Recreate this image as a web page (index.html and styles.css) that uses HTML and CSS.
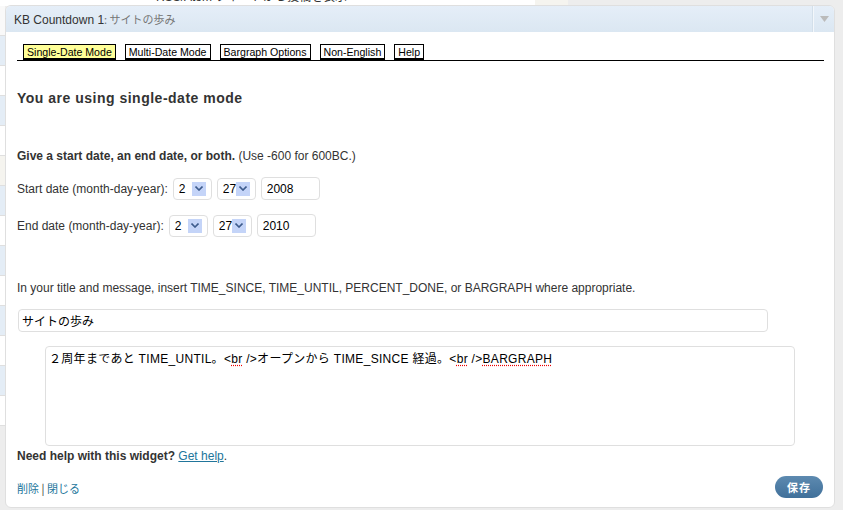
FILE: index.html
```html
<!DOCTYPE html>
<html lang="ja">
<head>
    <meta charset="UTF-8">
    <title>KB Countdown widget</title>
    <link rel="stylesheet" href="styles.css">
</head>
<body>
    <!-- the admin page that sits behind the open widget -->
    <div class="backdrop">
        <div class="backdrop-top">
            <span class="backdrop-text">RSS/Atom フィードから投稿を表示</span>
        </div>
        <div class="backdrop-side">
            <span class="band band-light"></span>
            <span class="band band-blue"></span>
            <span class="band"></span>
            <span class="band band-blue"></span>
            <span class="band"></span>
            <span class="band band-beige"></span>
            <span class="band band-blue"></span>
            <span class="band"></span>
            <span class="band band-blue"></span>
            <span class="band"></span>
            <span class="band band-blue"></span>
            <span class="band"></span>
            <span class="band band-blue"></span>
            <span class="band"></span>
        </div>
    </div>

    <div class="widget">
        <div class="widget-top">
            <h4 class="widget-title">KB Countdown 1<span class="in-widget-title">: サイトの歩み</span></h4>
            <a class="widget-toggle" href="#">
                <svg width="9" height="6" viewBox="0 0 9 6"><path d="M0 0h9L4.5 6z" fill="#bbb"/></svg>
            </a>
        </div>

        <div class="widget-inside">
            <ul class="kb-tabs">
                <li><a class="kb-tab active" href="#">Single-Date Mode</a></li>
                <li><a class="kb-tab" href="#">Multi-Date Mode</a></li>
                <li><a class="kb-tab" href="#">Bargraph Options</a></li>
                <li><a class="kb-tab" href="#">Non-English</a></li>
                <li><a class="kb-tab" href="#">Help</a></li>
            </ul>

            <h3 class="mode-heading">You are using single-date mode</h3>

            <p class="hint"><strong>Give a start date, an end date, or both.</strong> (Use -600 for 600BC.)</p>

            <div class="date-row">
                <label>Start date (month-day-year):</label>
                <span class="select"><select><option>2</option></select><span class="select-arrow"><svg width="8" height="5" viewBox="0 0 8 5"><path d="M0.5 0.5L4 4L7.5 0.5" fill="none" stroke="#3d5b8c" stroke-width="1.6"/></svg></span></span>
                <span class="select"><select><option>27</option></select><span class="select-arrow"><svg width="8" height="5" viewBox="0 0 8 5"><path d="M0.5 0.5L4 4L7.5 0.5" fill="none" stroke="#3d5b8c" stroke-width="1.6"/></svg></span></span>
                <input class="year" type="text" value="2008">
            </div>

            <div class="date-row">
                <label>End date (month-day-year):</label>
                <span class="select"><select><option>2</option></select><span class="select-arrow"><svg width="8" height="5" viewBox="0 0 8 5"><path d="M0.5 0.5L4 4L7.5 0.5" fill="none" stroke="#3d5b8c" stroke-width="1.6"/></svg></span></span>
                <span class="select"><select><option>27</option></select><span class="select-arrow"><svg width="8" height="5" viewBox="0 0 8 5"><path d="M0.5 0.5L4 4L7.5 0.5" fill="none" stroke="#3d5b8c" stroke-width="1.6"/></svg></span></span>
                <input class="year" type="text" value="2010">
            </div>

            <p class="insert-hint">In your title and message, insert TIME_SINCE, TIME_UNTIL, PERCENT_DONE, or BARGRAPH where appropriate.</p>

            <input class="title-input" type="text" value="サイトの歩み">

            <div class="message-box">２周年まであと TIME_UNTIL。&lt;<span class="spell">br</span> /&gt;オープンから TIME_SINCE 経過。&lt;<span class="spell">br</span> /&gt;<span class="spell">BARGRAPH</span></div>

            <p class="need-help"><strong>Need help with this widget?</strong> <a href="#">Get help</a>.</p>

            <div class="widget-control-actions">
                <div class="control-links">
                    <a href="#">削除</a> | <a href="#">閉じる</a>
                </div>
                <button class="save-button" type="button">保存</button>
            </div>
        </div>
    </div>
</body>
</html>
```

FILE: styles.css
```css
* {
    box-sizing: border-box;
}

body {
    margin: 0;
    width: 843px;
    height: 510px;
    overflow: hidden;
    background-color: #ededed;
    font-family: 'Liberation Sans', Arial, 'Noto Sans CJK JP', sans-serif;
    font-size: 12px;
    color: #333;
    position: relative;
}

a {
    color: #21759b;
}

/* backdrop: the page under the widget */
.backdrop {
    position: absolute;
    top: 0;
    left: 0;
    width: 843px;
    height: 510px;
}

.backdrop-top {
    position: absolute;
    top: 0;
    left: 0;
    width: 568px;
    height: 6px;
    background: linear-gradient(to right, #fff 0 535px, #f5f4ef 535px);
    overflow: hidden;
}

.backdrop-text {
    position: absolute;
    left: 156px;
    top: -11px;
    font-size: 12px;
    line-height: 16px;
    color: #333;
    white-space: nowrap;
}

.backdrop-side {
    position: absolute;
    top: 6px;
    left: 0;
    width: 5px;
    display: flex;
    flex-direction: column;
}

.band {
    display: block;
    height: 30px;
    background: #fff;
    border-bottom: 1px solid #dfdfdf;
}

.band-light {
    background: #f9f9f9;
}

.band-blue {
    background: #e4edf6;
}

.band-beige {
    background: #f5f4ef;
}

/* widget box */
.widget {
    position: relative;
    margin: 5px 0 0 5px;
    width: 830px;
    height: 503px;
    background: #fff;
    border: 1px solid #dfdfdf;
    border-radius: 6px;
    overflow: hidden;
}

.widget-top {
    display: flex;
    align-items: center;
    height: 26px;
    background: linear-gradient(to bottom, #e5eef8, #dbe7f2);
}

.widget-title {
    flex: 1;
    margin: 0;
    padding-left: 8px;
    font-size: 12px;
    font-weight: normal;
    color: #333;
}

.in-widget-title {
    color: #777;
    font-family: 'Noto Sans CJK JP', sans-serif;
    font-size: 11px;
}

.widget-toggle {
    display: flex;
    align-items: center;
    justify-content: center;
    width: 21px;
    height: 26px;
    border-left: 1px solid #f3f7fb;
    box-shadow: -1px 0 0 #d3dfea;
}

.widget-inside {
    padding: 0 10px 0 11px;
}

/* tab strip */
.kb-tabs {
    display: flex;
    gap: 9px;
    list-style: none;
    margin: 12px 0 0;
    padding: 0 0 0 6px;
    border-bottom: 1px solid #000;
}

.kb-tab {
    display: block;
    padding: 1px 3px 0;
    border: 1px solid #000;
    border-bottom-width: 2px;
    background: #fff;
    color: #000;
    font-size: 10.6px;
    line-height: 12px;
    text-decoration: none;
}

.kb-tab.active {
    background: #ffff99;
}

.mode-heading {
    margin: 27px 0 0;
    font-size: 14px;
    letter-spacing: 0.5px;
    line-height: 20px;
    color: #333;
}

.hint {
    margin: 40px 0 0;
    line-height: 16px;
}

.date-row {
    display: flex;
    align-items: center;
    gap: 5px;
    margin-top: 13px;
}

.date-row + .date-row {
    margin-top: 14px;
}

.select {
    position: relative;
    display: block;
    width: 39px;
    height: 22px;
    border: 1px solid #dfdfdf;
    border-radius: 4px;
    background: #fff;
}

.select select {
    appearance: none;
    -webkit-appearance: none;
    border: none;
    background: transparent;
    width: 100%;
    height: 100%;
    padding: 0 0 0 5px;
    font-family: 'Liberation Sans', Arial, sans-serif;
    font-size: 12px;
    color: #000;
}

.select-arrow {
    position: absolute;
    right: 5px;
    top: 3px;
    width: 14px;
    height: 14px;
    display: flex;
    align-items: center;
    justify-content: center;
    background: #c4d4f8;
    pointer-events: none;
}

.year {
    width: 59px;
    height: 23px;
    border: 1px solid #dfdfdf;
    border-radius: 4px;
    padding: 0 5px;
    font-family: 'Liberation Sans', Arial, sans-serif;
    font-size: 12px;
    color: #000;
}

.insert-hint {
    margin: 43px 0 0;
    line-height: 16px;
}

.title-input {
    display: block;
    width: 750px;
    height: 23px;
    margin: 13px 0 0 1px;
    border: 1px solid #dfdfdf;
    border-radius: 4px;
    padding: 0 3px;
    font-family: 'Noto Sans CJK JP', sans-serif;
    font-size: 12px;
    color: #000;
}

.message-box {
    width: 750px;
    height: 100px;
    margin: 14px 0 0 28px;
    border: 1px solid #dfdfdf;
    border-radius: 4px;
    padding: 3px 3px;
    font-family: 'Liberation Sans', Arial, 'Noto Sans CJK JP', sans-serif;
    font-size: 12px;
    letter-spacing: 0.3px;
    line-height: 18px;
    color: #000;
}

.spell {
    text-decoration: underline dotted #e00;
    text-underline-offset: 2px;
}

.need-help {
    margin: 2px 0 0;
    line-height: 16px;
}

.widget-control-actions {
    display: flex;
    align-items: center;
    justify-content: space-between;
    margin-top: 12px;
    padding-right: 1px;
}

.control-links {
    font-size: 11px;
    font-family: 'Noto Sans CJK JP', sans-serif;
    padding-top: 1px;
}

.control-links a {
    text-decoration: none;
}

.save-button {
    width: 48px;
    height: 22px;
    border: none;
    border-radius: 11px;
    background: linear-gradient(to bottom, #5d8ab0, #40709a);
    color: #fff;
    font-family: 'Noto Sans CJK JP', sans-serif;
    font-size: 11px;
    font-weight: bold;
    letter-spacing: 1px;
    cursor: pointer;
}
```
